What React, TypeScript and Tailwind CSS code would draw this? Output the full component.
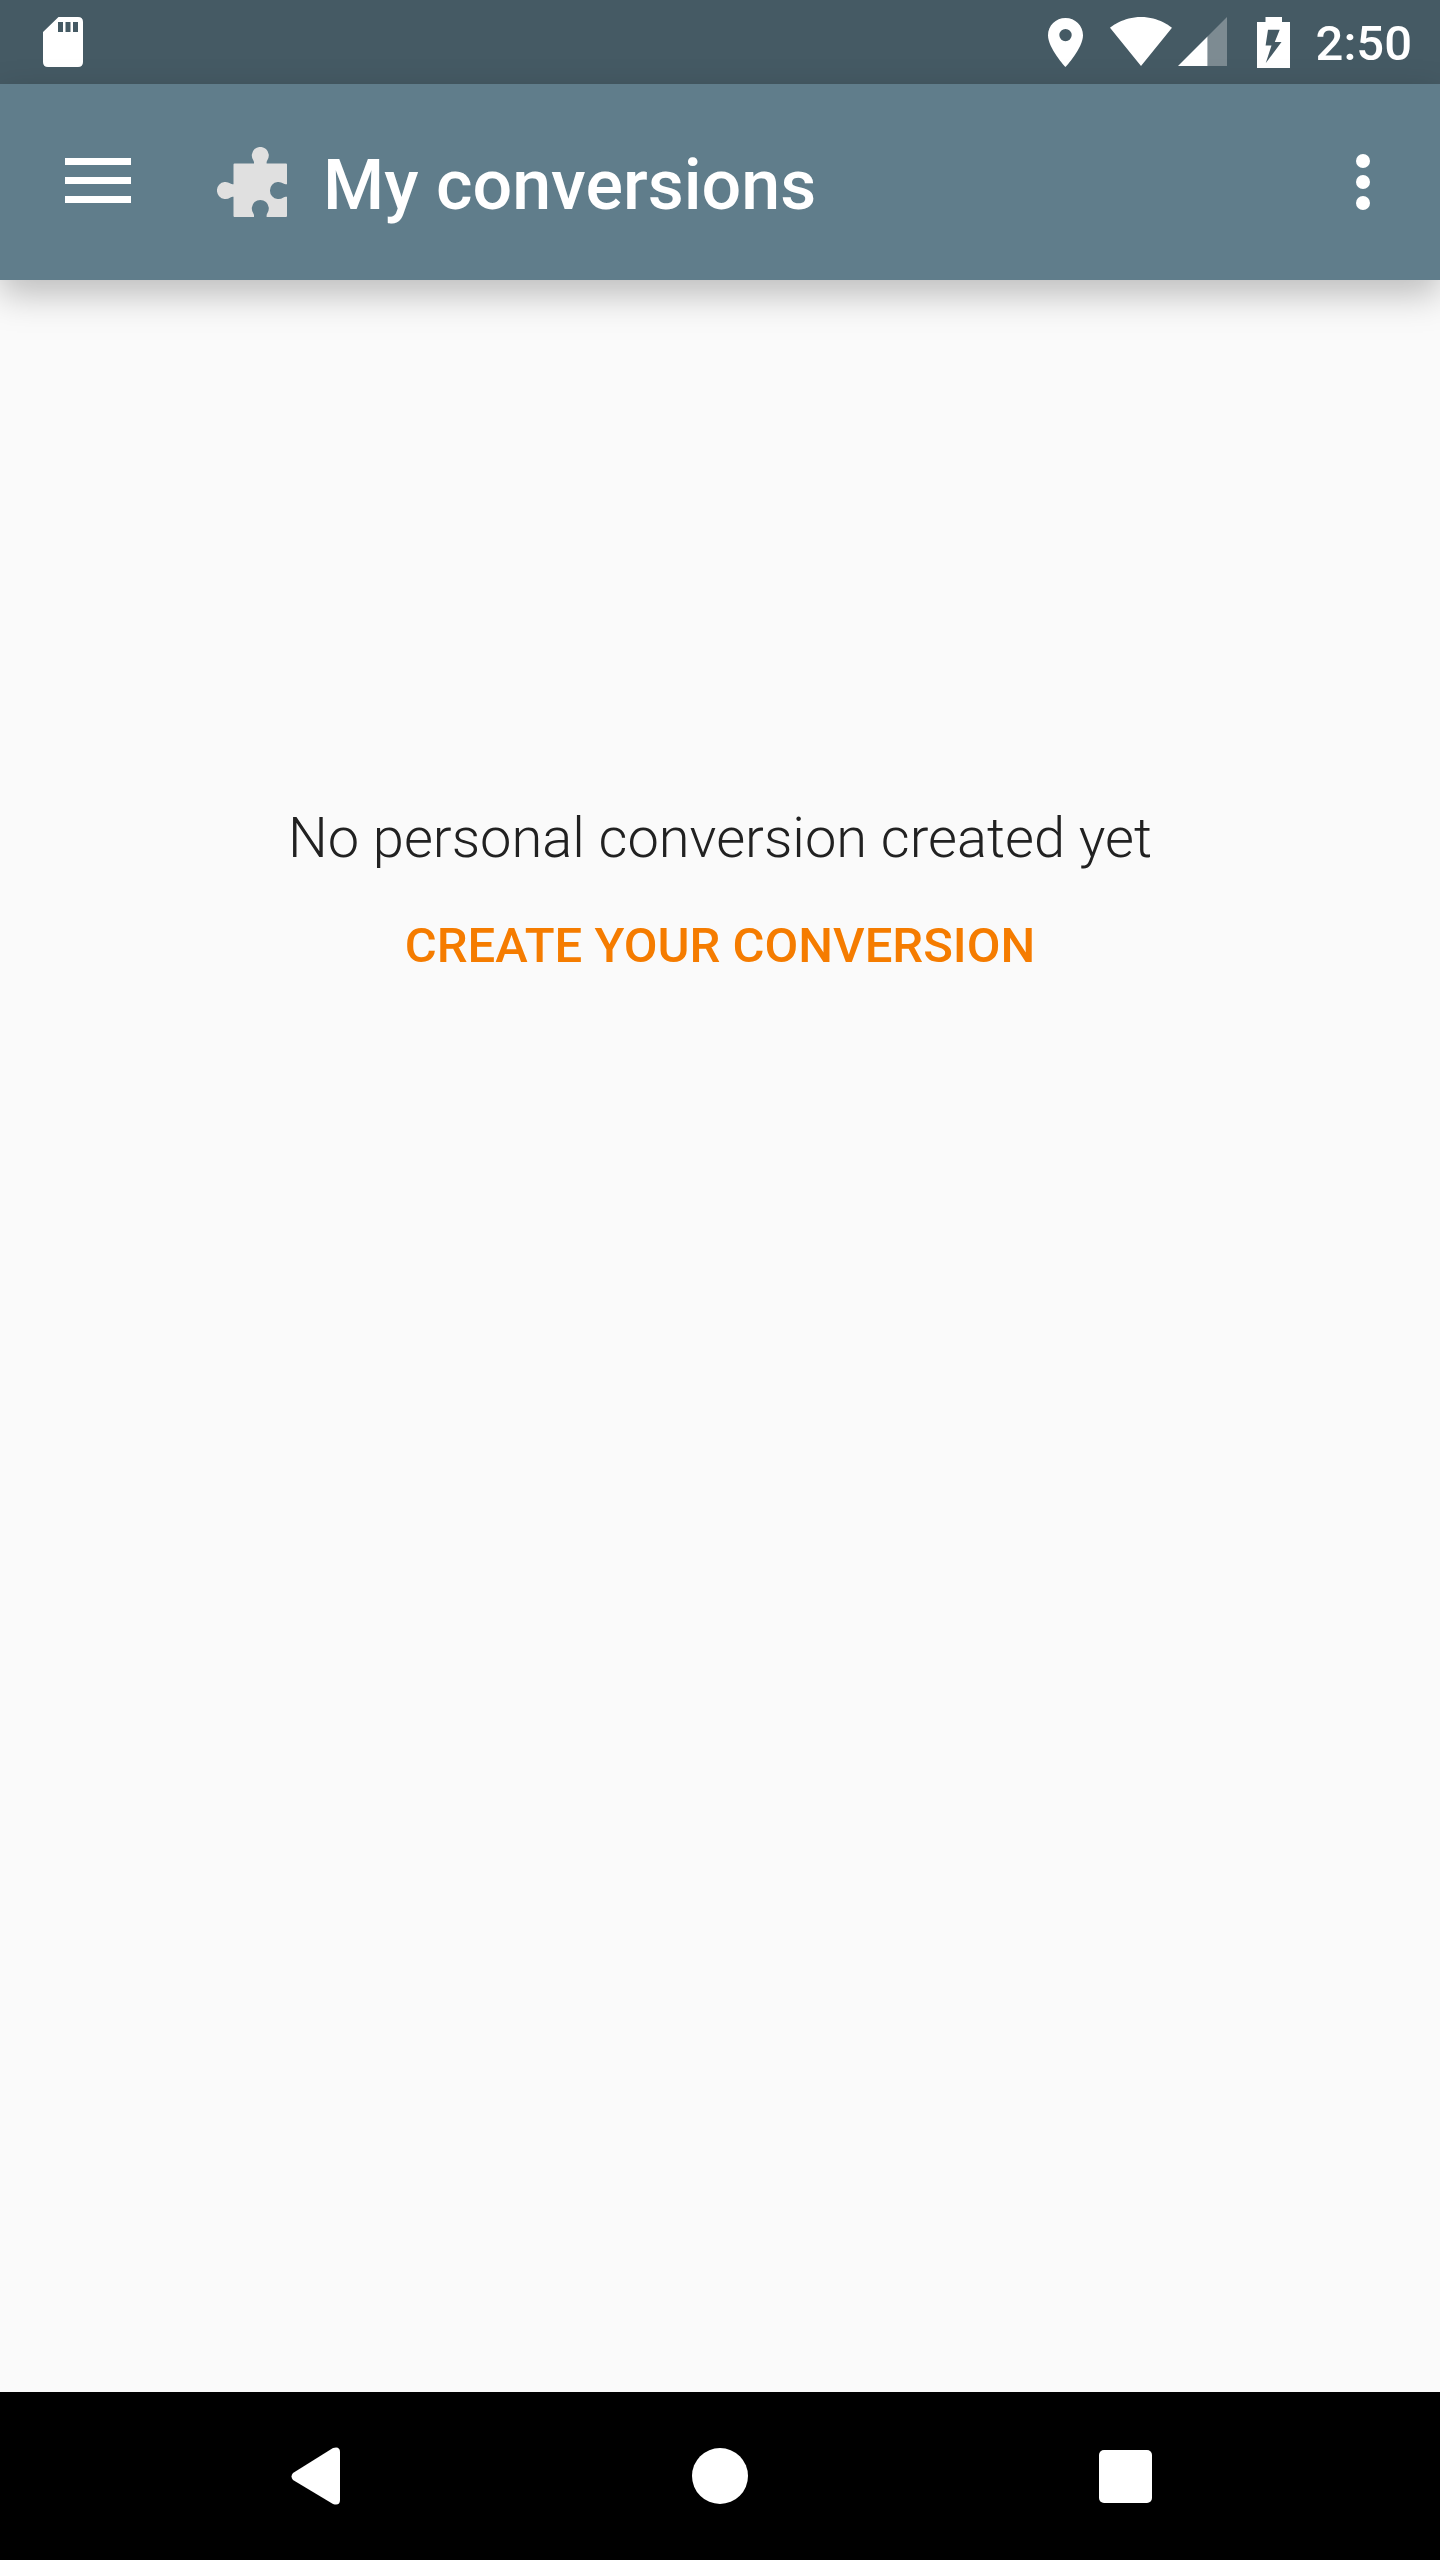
import React from "react";

function SdCardIcon() {
  return (
    <svg className="h-[50px] w-10 fill-white" viewBox="0 0 40 50" aria-hidden="true">
      <path
        fillRule="evenodd"
        d="M15.5 0H35Q40 0 40 5V45Q40 50 35 50H5Q0 50 0 45V15ZM15 5V15H20V5ZM22.5 5V15H27.5V5ZM30 5V15H35V5Z"
      />
    </svg>
  );
}

function PinIcon() {
  return (
    <svg className="h-[50px] w-[35px] fill-white" viewBox="0 0 35 50" aria-hidden="true">
      <path
        fillRule="evenodd"
        d="M17.5 1C7.8 1 0 8.5 0 18.2C0 31.1 17.5 50 17.5 50S35 31.1 35 18.2C35 8.5 27.2 1 17.5 1ZM17.5 24.300A6.2 6.2 0 1 1 17.5 11.900A6.2 6.2 0 0 1 17.5 24.3Z"
      />
    </svg>
  );
}

function WifiIcon() {
  return (
    <svg className="h-[50px] w-[62px] fill-white" viewBox="0 0 62 50" aria-hidden="true">
      <path d="M31 49L62 10.7C60.8 9.8 49 0 31 0S1.2 9.8 0 10.7Z" />
    </svg>
  );
}

function SignalIcon() {
  return (
    <svg className="h-[50px] w-[49px] fill-white" viewBox="0 0 49 50" aria-hidden="true">
      <path fillOpacity="0.3" d="M29.5 49H49V0L29.5 19.5Z" />
      <path d="M0 49H29.5V19.5Z" />
    </svg>
  );
}

function BatteryIcon() {
  return (
    <svg className="h-[51px] w-[33px] fill-white" viewBox="0 0 33 51" aria-hidden="true">
      <path
        fillRule="evenodd"
        d="M8.500 0H25V5H33V51H0V5H8.500ZM11 12.800L8.600 28.600H14.500L8.800 46L24.500 25H17.800L22.700 12.800Z"
      />
    </svg>
  );
}

function PuzzleIcon() {
  return (
    <svg className="size-[70px] fill-[#e0e0e0]" viewBox="0 0 70 70" aria-hidden="true">
      <path d="M17.5 16.5H37V15.5Q37 14.500 36.400 13.400A8.500 8.500 0 1 1 50.200 13.400Q49.600 14.500 49.600 15.500V16.500H69Q70 16.500 70 17.500V37.200H68.500Q67.500 37.200 66.400 36.600A8.500 8.500 0 1 0 66.400 50.400Q67.500 49.800 68.500 49.800H70V69Q70 70 69 70H49.600V68.500Q49.600 67.500 50.200 66.400A8.500 8.500 0 1 0 36.400 66.400Q37 67.500 37 68.500V70H17.500Q16.500 70 16.500 69V49.800H15.500Q14.500 49.800 13.400 50.400A8.500 8.500 0 1 1 13.400 36.600Q14.500 37.200 15.500 37.200H16.500V17.500Q16.500 16.500 17.500 16.500Z" />
    </svg>
  );
}

export default function App() {
  return (
    <div className="flex min-h-screen flex-col bg-[#fafafa] font-['Roboto',sans-serif]">
      <div className="flex h-[84px] items-center bg-[#455a64] pr-[28px] pl-[43px] text-white">
        <SdCardIcon />
        <div className="ml-auto flex items-center">
          <PinIcon />
          <span className="w-[27px]" />
          <WifiIcon />
          <span className="w-1.5" />
          <SignalIcon />
          <span className="w-[30px]" />
          <BatteryIcon />
          <time className="ml-[26px] pt-1 text-[49px] leading-[58px] font-medium">2:50</time>
        </div>
      </div>

      <header className="z-10 flex h-[196px] items-center bg-[#607d8b] pr-[49px] pl-[42px] text-white shadow-[0_14px_34px_rgba(0,0,0,0.25)]">
        <button type="button" aria-label="Open navigation menu" className="flex size-28 items-center justify-center pb-[3px]">
          <svg className="h-[45px] w-[66px] fill-white" viewBox="0 0 66 45" aria-hidden="true">
            <path d="M0 0H66V7H0ZM0 19H66V26H0ZM0 38H66V45H0Z" />
          </svg>
        </button>
        <span className="ml-[63px]">
          <PuzzleIcon />
        </span>
        <h1 className="ml-9 pt-1.5 text-[70px] leading-[82px] font-medium">My conversions</h1>
        <button type="button" aria-label="More options" className="ml-auto flex h-28 w-14 items-center justify-center">
          <svg className="h-14 w-3.5 fill-white" viewBox="0 0 14 56" aria-hidden="true">
            <circle cx="7" cy="7" r="7" />
            <circle cx="7" cy="28" r="7" />
            <circle cx="7" cy="49" r="7" />
          </svg>
        </button>
      </header>

      <main className="flex flex-1 flex-col items-center pt-[525px]">
        <p className="text-[56px] leading-[66px] font-light text-[#212121]">No personal conversion created yet</p>
        <button type="button" className="mt-8 px-7 py-3.5 text-[49px] leading-[58px] font-medium text-[#f57c00] uppercase">
          Create your conversion
        </button>
      </main>

      <nav aria-label="System navigation" className="flex h-[168px] items-center justify-center gap-[181px] bg-black">
        <button type="button" aria-label="Back" className="flex h-full w-56 items-center justify-center">
          <svg className="h-[58px] w-[49px] fill-white" viewBox="0 0 49 58" aria-hidden="true">
            <path d="M2 26L42 1Q49-1 49 5V53Q49 59 42 57L2 33Q-1 29.5 2 26Z" />
          </svg>
        </button>
        <button type="button" aria-label="Home" className="flex h-full w-56 items-center justify-center">
          <span className="size-14 rounded-full bg-white" />
        </button>
        <button type="button" aria-label="Recent apps" className="flex h-full w-56 items-center justify-center">
          <span className="size-[53px] rounded-[5px] bg-white" />
        </button>
      </nav>
    </div>
  );
}
